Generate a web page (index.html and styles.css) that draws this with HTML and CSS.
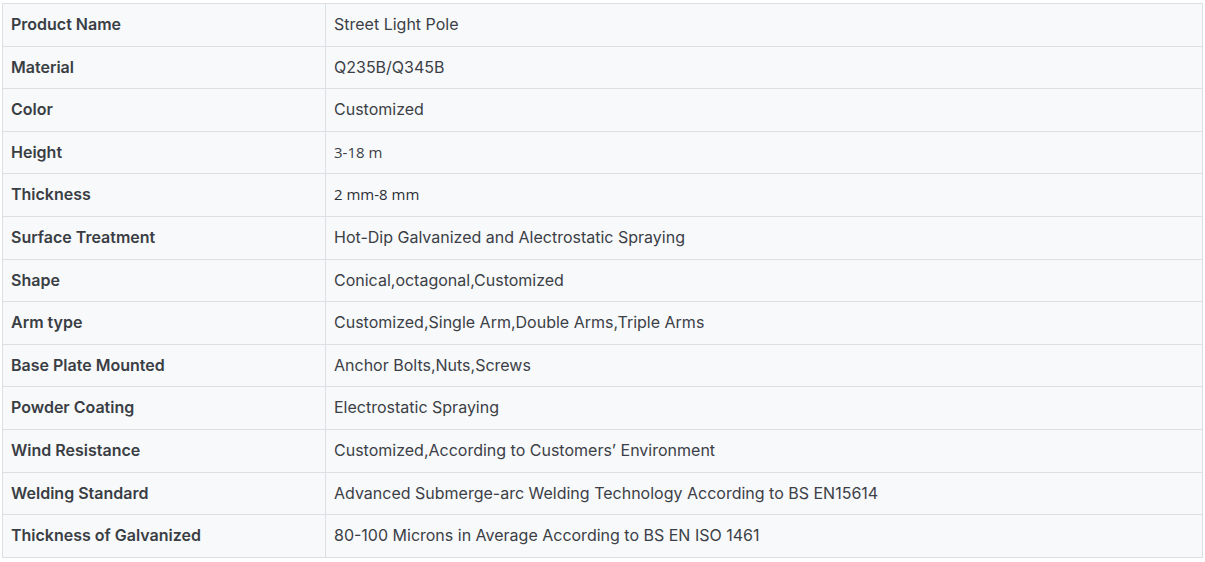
FILE: index.html
```html
<!DOCTYPE html>
<html lang="en">
<head>
    <meta charset="UTF-8">
    <title>Street Light Pole Specs</title>
    <link rel="stylesheet" href="styles.css">
</head>
<body>
    <table class="specs">
        <tr><td class="label">Product Name</td><td>Street Light Pole</td></tr>
        <tr><td class="label">Material</td><td>Q235B/Q345B</td></tr>
        <tr><td class="label">Color</td><td>Customized</td></tr>
        <tr><td class="label">Height</td><td><span class="alt">3-18 m</span></td></tr>
        <tr><td class="label">Thickness</td><td><span class="alt dark">2 mm-8 mm</span></td></tr>
        <tr><td class="label">Surface Treatment</td><td>Hot-Dip Galvanized and Alectrostatic Spraying</td></tr>
        <tr><td class="label">Shape</td><td>Conical,octagonal,Customized</td></tr>
        <tr><td class="label">Arm type</td><td>Customized,Single Arm,Double Arms,Triple Arms</td></tr>
        <tr><td class="label">Base Plate Mounted</td><td>Anchor Bolts,Nuts,Screws</td></tr>
        <tr><td class="label">Powder Coating</td><td>Electrostatic Spraying</td></tr>
        <tr><td class="label">Wind Resistance</td><td>Customized,According to Customers’ Environment</td></tr>
        <tr><td class="label">Welding Standard</td><td>Advanced Submerge-arc Welding Technology According to BS EN15614</td></tr>
        <tr><td class="label">Thickness of Galvanized</td><td>80-100 Microns in Average According to BS EN ISO 1461</td></tr>
    </table>
</body>
</html>
```

FILE: styles.css
```css
* { box-sizing: border-box; }
body { margin: 0; padding: 3px 2px; background: #ffffff; font-family: Inter, "Noto Sans", sans-serif; color: #3c4046; }
.specs { width: 1201px; border-collapse: collapse; background: #f7f9fb; font-size: 16px; }
.specs td { border: 1px solid #dcdfe3; padding: 10px 8px; line-height: 21.6px; vertical-align: middle; }
.label { width: 323px; font-weight: 600; color: #3a3e44; }
.alt { font-family: "Open Sans", "Noto Sans", sans-serif; font-size: 15px; }
.dark { color: #2c3036; }
```
